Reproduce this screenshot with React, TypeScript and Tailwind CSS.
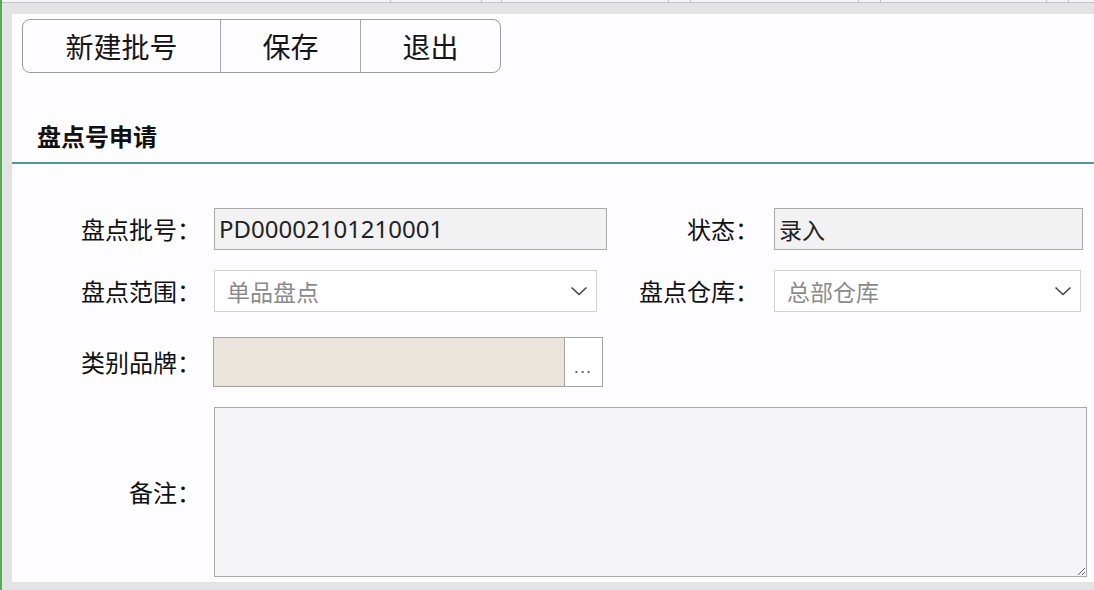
import { ReactNode } from "react";

const CJK = "font-['Noto_Sans_CJK_SC','Noto_Sans',sans-serif]";

// header strip above the panel: column borders of the grid behind it
const HEADER_TICKS = [
  "w-[389px]",
  "w-[91px]",
  "w-[20px]",
  "w-[167px]",
  "w-[22px]",
  "w-[168px]",
  "w-[22px]",
  "w-[166px]",
  "w-[22px]",
];

function Chevron() {
  return (
    <svg width="18" height="10" viewBox="0 0 18 10" fill="none" className="shrink-0">
      <path d="M1.5 1.5 L9 8.5 L16.5 1.5" stroke="#444" strokeWidth="1.6" />
    </svg>
  );
}

function Label({ children, className }: { children: ReactNode; className: string }) {
  return (
    <div className={`shrink-0 text-right text-[24px] leading-none text-[#111] ${className}`}>
      {children}
    </div>
  );
}

function Dropdown({ value, className }: { value: string; className: string }) {
  return (
    <div
      className={`flex h-[42px] items-center justify-between border border-[#d2d2d2] bg-white pl-3 pr-2 ${className}`}
    >
      <span className="text-[23px] leading-none text-[#8a8a8a]">{value}</span>
      <Chevron />
    </div>
  );
}

export default function App() {
  return (
    <div className={`flex h-[590px] w-[1094px] overflow-hidden bg-[#e3e3e6] ${CJK}`}>
      <div className="w-[2px] shrink-0 bg-[#5fa65c]" />
      <div className="flex min-w-0 flex-1 flex-col">
        <div className="flex h-[3px] shrink-0 border-b border-[#c4c4c6] bg-[#f4f4f5]">
          {HEADER_TICKS.map((w, i) => (
            <div key={i} className={`${w} shrink-0 border-r border-[#c4c4c6]`} />
          ))}
        </div>

        <div className="ml-[10px] mt-[11px] flex h-[568px] flex-col bg-[#fdfcfe]">
          {/* toolbar */}
          <div className="ml-[10px] mt-[5px] flex h-[54px] w-[479px] overflow-hidden rounded-[8px] border border-[#9c9c9c] text-[28px] text-[#161616]">
            <div className="flex w-[198px] items-center justify-center border-r border-[#a8a8a8]">新建批号</div>
            <div className="flex w-[140px] items-center justify-center border-r border-[#a8a8a8]">保存</div>
            <div className="flex flex-1 items-center justify-center">退出</div>
          </div>

          <div className="border-b-2 border-[#4b98a4] pb-[10px] pl-[25px] pt-[47px] text-[24px] font-bold leading-[32px] text-[#111]">
            盘点号申请
          </div>

          <div className="mt-[44px] flex flex-col">
            <div className="flex h-[42px] items-center">
              <Label className="w-[189px]">盘点批号：</Label>
              <div className="ml-[13px] flex h-[42px] w-[393px] items-center border border-[#a9a9a9] bg-[#f2f2f2] px-[4px] font-['Noto_Sans',sans-serif] text-[24px] text-[#222]">
                PD00002101210001
              </div>
              <Label className="w-[152px]">状态：</Label>
              <div className="ml-[15px] flex h-[42px] w-[309px] items-center border border-[#a9a9a9] bg-[#f2f2f2] px-[4px] text-[23px] text-[#222]">
                录入
              </div>
            </div>

            <div className="mt-[20px] flex h-[42px] items-center">
              <Label className="w-[189px]">盘点范围：</Label>
              <Dropdown value="单品盘点" className="ml-[13px] w-[383px]" />
              <Label className="w-[162px]">盘点仓库：</Label>
              <Dropdown value="总部仓库" className="ml-[15px] w-[307px]" />
            </div>

            <div className="mt-[25px] flex h-[50px] items-center">
              <Label className="w-[189px]">类别品牌：</Label>
              <div className="ml-[12px] flex h-[50px]">
                <div className="w-[352px] border border-[#a3a3a3] bg-[#ebe4da]" />
                <div className="flex w-[38px] items-end justify-center border border-l-0 border-[#a3a3a3] bg-white pb-[12px] text-[15px] leading-none tracking-[2px] text-[#555]">
                  ...
                </div>
              </div>
            </div>

            <div className="mt-[20px] flex h-[170px] items-center">
              <Label className="w-[189px]">备注：</Label>
              <textarea
                readOnly
                className="ml-[13px] h-[170px] w-[873px] resize border border-[#a9a9a9] bg-[#f5f4f6] outline-none"
              />
            </div>
          </div>
        </div>
      </div>
    </div>
  );
}
